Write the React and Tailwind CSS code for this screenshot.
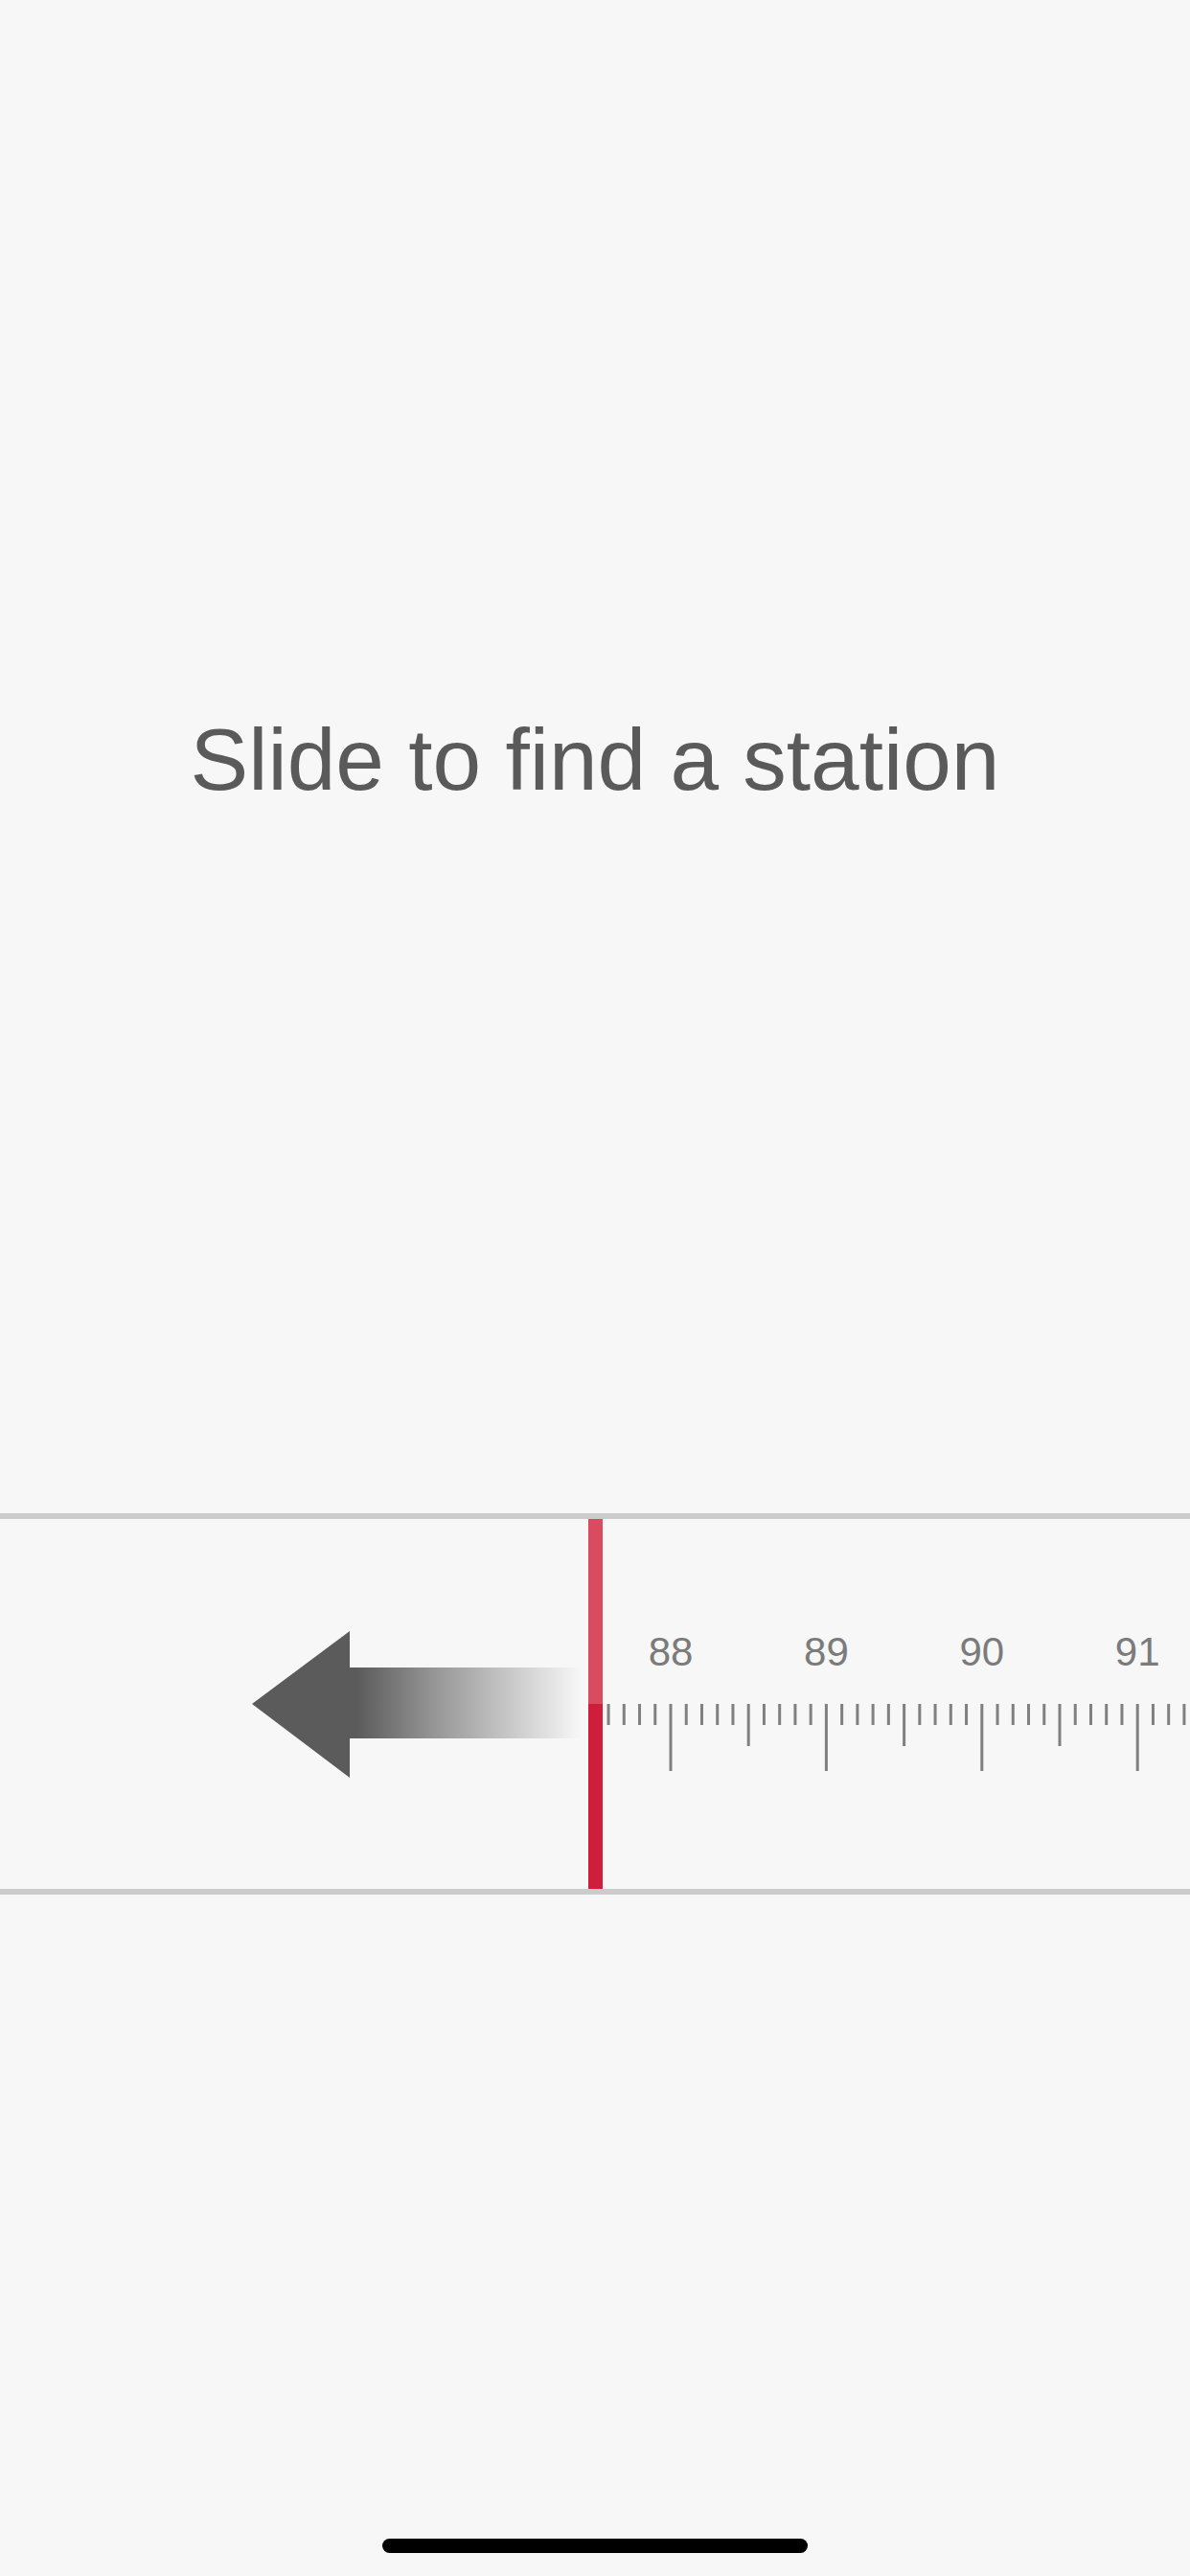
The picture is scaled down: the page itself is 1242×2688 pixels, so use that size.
import React from "react";

// FM dial: 87.5 sits under the needle, 162.4px per MHz
const DIAL_LEFT = 629;
const PX_PER_MHZ = 162.4;
const freqToX = (f) => 700 + (f - 88) * PX_PER_MHZ - DIAL_LEFT;

function Arrow() {
  return (
    <svg width="614" height="386" viewBox="0 0 614 386" className="shrink-0">
      <defs>
        <linearGradient id="shaftFade" gradientUnits="userSpaceOnUse" x1="372" y1="0" x2="606" y2="0">
          <stop offset="0" stopColor="#5b5b5b" stopOpacity="1" />
          <stop offset="0.35" stopColor="#5b5b5b" stopOpacity="0.62" />
          <stop offset="1" stopColor="#5b5b5b" stopOpacity="0" />
        </linearGradient>
      </defs>
      <polygon points="263,193 365,117 365,270" fill="#5b5b5b" />
      <rect x="364" y="155" width="242" height="74" fill="url(#shaftFade)" />
    </svg>
  );
}

function Dial() {
  const ticks = [];
  for (let i = 876; i <= 914; i++) {
    const f = i / 10;
    const x = freqToX(f);
    let len = 22;
    if (i % 10 === 0) len = 70;
    else if (i % 5 === 0) len = 44;
    ticks.push(<rect key={i} x={x - 1.5} y={193} width="3" height={len} fill="#808080" />);
  }
  const labels = [88, 89, 90, 91];
  return (
    <svg width="613" height="386" viewBox="0 0 613 386" className="shrink-0">
      {ticks}
      {labels.map((f) => (
        <text
          key={f}
          x={freqToX(f)}
          y="153"
          textAnchor="middle"
          fontSize="42"
          fill="#7b7b7b"
          fontFamily="'Liberation Sans', Arial, sans-serif"
        >
          {f}
        </text>
      ))}
    </svg>
  );
}

export default function App() {
  return (
    <div className="flex flex-col w-full h-[2688px] bg-[#f7f7f7] overflow-hidden font-['Liberation_Sans',Arial,sans-serif]">
      {/* Prompt */}
      <div className="h-[1579px] flex items-center justify-center">
        <h1 className="text-[91px] leading-none font-normal text-[#5a5a5a] pt-[6px]">
          Slide to find a station
        </h1>
      </div>

      <div className="h-[6px] bg-[#cccccc]" />

      {/* Tuner */}
      <div className="h-[386px] flex">
        <Arrow />
        <div className="w-[15px] shrink-0 flex flex-col">
          <div className="flex-1 bg-[#d84b60]" />
          <div className="flex-1 bg-[#cf1d3c]" />
        </div>
        <Dial />
      </div>

      <div className="h-[6px] bg-[#cccccc]" />

      {/* Home indicator */}
      <div className="flex-1 flex flex-col justify-end items-center pb-[24px]">
        <div className="w-[444px] h-[15px] rounded-full bg-black" />
      </div>
    </div>
  );
}
